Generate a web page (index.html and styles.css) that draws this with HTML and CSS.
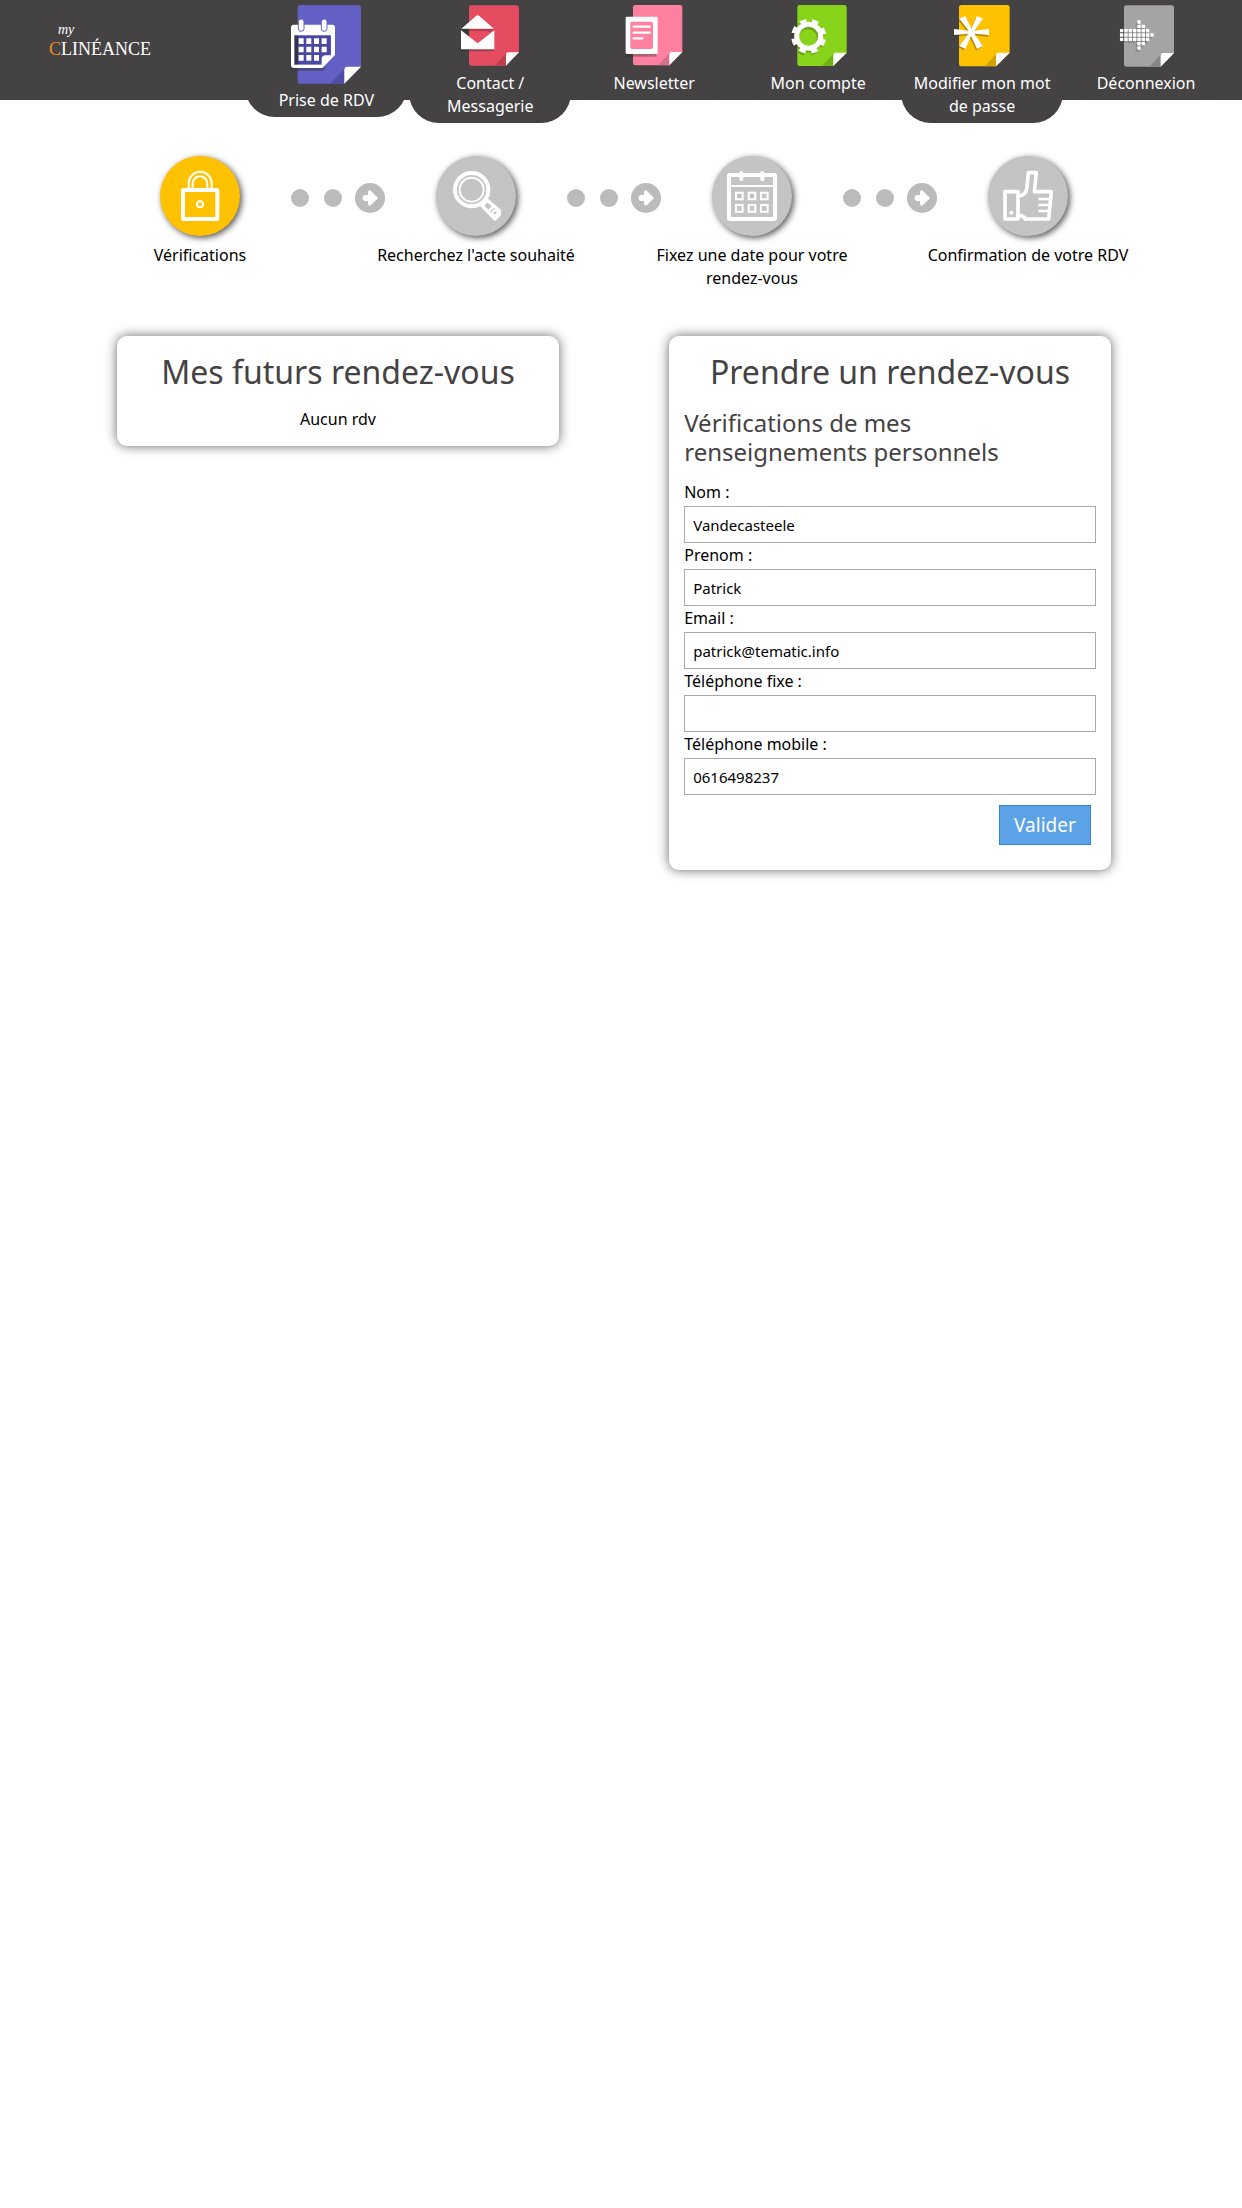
FILE: index.html
```html
<!DOCTYPE html>
<html lang="fr">
<head>
  <meta charset="utf-8">
  <meta name="viewport" content="width=device-width, initial-scale=1">
  <title>My Clinéance - Prise de RDV</title>
  <link rel="stylesheet" href="styles.css">
</head>
<body>
  <header class="header">
    <a class="logo" href="#">
      <span class="logo-my">my</span>
      <span class="logo-name"><span class="logo-c">C</span>LINÉANCE</span>
    </a>
    <nav class="menu">
      <a class="menu-item" href="#">
        <svg width="74" height="80" viewBox="150 12 222 240" aria-hidden="true">
          <path fill="#6260c4" d="M184 15H358Q366 15 366 23V200L316 251H184Q176 251 176 243V23Q176 15 184 15Z"/>
          <path fill="#4f4ca5" d="M316 208V251H274Z"/>
          <path fill="#fff" d="M366 200L316 251V210Q316 200 326 200Z"/>
          <path fill="#35343c" d="M152 108V198Q152 212 164 212H252L262 202H160Z" opacity=".5"/>
          <path fill="#4a47a0" d="M168 106H274V162L246 192H168Z"/>
          <path fill="#33324f" d="M166 106H177V192H166Z"/>
          <path fill="#fff" fill-rule="evenodd" d="M164 74H280Q288 74 288 82V165L250 204H164Q156 204 156 196V82Q156 74 164 74ZM166 106V194H248V174Q250 166 258 166H276V106Z"/>
          <g fill="#fff" stroke="#6260c4" stroke-width="3">
            <rect x="178" y="57" width="17" height="37" rx="8"/>
            <rect x="247" y="57" width="17" height="37" rx="8"/>
          </g>
          <path fill="#fff" d="M179 115h15v17h-15zM202 115h15v17h-15zM225 115h15v17h-15zM248 115h15v17h-15zM179 140h15v17h-15zM202 140h15v17h-15zM225 140h15v17h-15zM248 140h15v17h-15zM179 165h15v17h-15zM202 165h15v17h-15zM225 165h15v17h-15z"/>
        </svg>
        <span>Prise de RDV</span>
      </a>
      <a class="menu-item" href="#">
        <svg width="62" height="63" viewBox="660 12 186 189" aria-hidden="true">
          <path fill="#e64c5f" d="M697 16H833Q840 16 840 23V157L801 197H697Q690 197 690 190V23Q690 16 697 16Z"/>
          <path fill="#bd4051" d="M801 161V197H766Z"/>
          <path fill="#fff" d="M840 157L801 197V165Q801 157 809 157Z"/>
          <path fill="#333" opacity=".45" d="M664 148H764V154H664Z"/>
          <path fill="#303a35" d="M667 87H690V108Z"/>
          <path fill="#b93d4d" d="M690 87H765L754 96H690Z"/>
          <path fill="#e64c5f" d="M690 93H748L716 128L690 106Z"/>
          <path fill="#fff" d="M667 86L712 47Q716 44 720 47L765 86ZM666 91L716 130L766 91V148H666Z"/>
        </svg>
        <span>Contact / Messagerie</span>
      </a>
      <a class="menu-item" href="#">
        <svg width="62" height="63" viewBox="130 12 186 189" aria-hidden="true">
          <path fill="#ff819f" d="M167 15H301Q308 15 308 22V156L269 196H167Q160 196 160 189V22Q160 15 167 15Z"/>
          <path fill="#d4708b" d="M269 160V196H235Z"/>
          <path fill="#fff" d="M308 156L269 196V164Q269 156 277 156Z"/>
          <path fill="#333" opacity=".4" d="M136 162H230V170H136Z"/>
          <rect x="138" y="50" width="96" height="112" rx="4" fill="#fff"/>
          <rect x="152" y="65" width="68" height="82" rx="5" fill="#ff819f"/>
          <path stroke="#fff" stroke-width="7" stroke-linecap="round" d="M162 80H210M162 98H210M162 115H188"/>
        </svg>
        <span>Newsletter</span>
      </a>
      <a class="menu-item" href="#">
        <svg width="62" height="63" viewBox="621 12 186 189" aria-hidden="true">
          <path fill="#88d41a" d="M659 15H793Q800 15 800 22V158L760 198H659Q652 198 652 191V22Q652 15 659 15Z"/>
          <path fill="#72b016" d="M760 162V198H726Z"/>
          <path fill="#fff" d="M800 158L760 198V166Q760 158 768 158Z"/>
          <g fill="none" stroke="#264000" opacity=".3">
            <circle cx="683" cy="115" r="35" stroke-width="15"/>
            <circle cx="683" cy="115" r="46" stroke-width="12" stroke-dasharray="18 18.13" stroke-dashoffset="-9"/>
          </g>
          <g fill="none" stroke="#fff">
            <circle cx="686" cy="109" r="36" stroke-width="15"/>
            <circle cx="686" cy="109" r="46" stroke-width="13" stroke-dasharray="19 17.13" stroke-dashoffset="-9"/>
          </g>
        </svg>
        <span>Mon compte</span>
      </a>
      <a class="menu-item" href="#">
        <svg width="62" height="63" viewBox="213 12 186 189" aria-hidden="true">
          <path fill="#ffc200" d="M244 15H382Q389 15 389 22V158L348 199H244Q237 199 237 192V22Q237 15 244 15Z"/>
          <path fill="#d3a100" d="M348 163V199H314Z"/>
          <path fill="#fff" d="M389 158L348 199V167Q348 158 357 158Z"/>
          <path fill="#3a3000" opacity=".4" d="M219 91L263 98L235 60L253 53L271 91L288 53L306 60L280 97L324 92V110L280 106L306 142L288 151L270 113L253 151L235 142L262 106L219 110Z"/>
          <path fill="#fff" d="M222 87L266 92L238 56L256 48L274 86L291 48L309 56L283 92L327 87V105L283 101L309 138L291 147L273 108L256 147L238 138L265 101L222 105Z"/>
        </svg>
        <span>Modifier mon mot de passe</span>
      </a>
      <a class="menu-item" href="#">
        <svg width="62" height="63" viewBox="703 12 186 189" aria-hidden="true">
          <path fill="#a4a4a4" d="M737 16H873Q880 16 880 23V159L840 200H737Q730 200 730 193V23Q730 16 737 16Z"/>
          <path fill="#868686" d="M840 164V200H806Z"/>
          <path fill="#fff" d="M880 159L840 200V168Q840 159 849 159Z"/>
          <g fill="none" stroke="#555" stroke-width="10" stroke-dasharray="10 3" opacity=".35">
            <path d="M713 98H800M713 111H813M713 124H800M765 72H775M765 85H788M765 137H788M765 150H775"/>
          </g>
          <g fill="none" stroke="#fff" stroke-width="10" stroke-dasharray="10 3">
            <path d="M718 92H806M718 105H821M718 118H806M770 66H780M770 79H793M770 131H793M770 144H780"/>
          </g>
        </svg>
        <span>Déconnexion</span>
      </a>
    </nav>
  </header>

  <main class="container">
    <ol class="steps">
      <li class="step">
        <div class="step-icons">
          <span class="circle active">
            <svg width="80" height="80" viewBox="90 48 240 240" fill="none" stroke="#fff" aria-hidden="true">
              <rect x="159" y="150" width="103" height="87" rx="2" stroke-width="12"/>
              <path stroke-width="6" d="M176 146V130A34 34 0 0 1 245 130V146"/>
              <path stroke-width="6" d="M188 146V131A22 22 0 0 1 232 131V146"/>
              <circle cx="210" cy="193" r="9" stroke-width="6"/>
            </svg>
          </span>
          <svg class="dots" width="94" height="30" viewBox="0 0 94 30" aria-hidden="true">
            <circle cx="9" cy="15" r="9"/><circle cx="42" cy="15" r="9"/><circle cx="79" cy="15" r="15"/>
            <path d="M73 12H77V9Q78 6 80 8L87 15L80 22Q78 24 77 21V18H73Q70 15 73 12Z"/>
          </svg>
        </div>
        <span class="step-label">Vérifications</span>
      </li>
      <li class="step">
        <div class="step-icons">
          <span class="circle">
            <svg width="80" height="80" viewBox="108 48 240 240" fill="none" stroke="#fff" aria-hidden="true">
              <circle cx="215" cy="149" r="50" stroke-width="12"/>
              <circle cx="215" cy="149" r="36" stroke-width="6"/>
              <path stroke-width="10" stroke-linejoin="round" d="M246 197L285 237L298 224V212L262 181Z"/>
              <path stroke-width="8" d="M268 212L280 199"/>
              <circle cx="285" cy="218" r="7" stroke-width="5"/>
            </svg>
          </span>
          <svg class="dots" width="94" height="30" viewBox="0 0 94 30" aria-hidden="true">
            <circle cx="9" cy="15" r="9"/><circle cx="42" cy="15" r="9"/><circle cx="79" cy="15" r="15"/>
            <path d="M73 12H77V9Q78 6 80 8L87 15L80 22Q78 24 77 21V18H73Q70 15 73 12Z"/>
          </svg>
        </div>
        <span class="step-label">Recherchez l'acte souhaité</span>
      </li>
      <li class="step">
        <div class="step-icons">
          <span class="circle">
            <svg width="80" height="80" viewBox="66 48 240 240" fill="none" stroke="#fff" aria-hidden="true">
              <rect x="117" y="105" width="138" height="132" rx="2" stroke-width="12"/>
              <path stroke-width="6" d="M117 138H255"/>
              <path stroke-width="12" stroke-linecap="round" d="M154 99V118M217 99V118"/>
              <path stroke-width="6" d="M138 158h20v20h-20zM176 158h20v20h-20zM213 158h20v20h-20zM138 195h20v20h-20zM176 195h20v20h-20zM213 195h20v20h-20z"/>
            </svg>
          </span>
          <svg class="dots" width="94" height="30" viewBox="0 0 94 30" aria-hidden="true">
            <circle cx="9" cy="15" r="9"/><circle cx="42" cy="15" r="9"/><circle cx="79" cy="15" r="15"/>
            <path d="M73 12H77V9Q78 6 80 8L87 15L80 22Q78 24 77 21V18H73Q70 15 73 12Z"/>
          </svg>
        </div>
        <span class="step-label">Fixez une date pour votre rendez-vous</span>
      </li>
      <li class="step">
        <div class="step-icons">
          <span class="circle">
            <svg width="80" height="80" viewBox="264 48 240 240" fill="none" stroke="#fff" stroke-linejoin="round" aria-hidden="true">
              <path stroke-width="11" d="M315 155H354V237H315Z"/>
              <path stroke-width="11" d="M356 168Q379 166 381 142L385 98H409L403 155H454L446 237H376Q370 226 358 226"/>
              <path stroke-width="7" d="M415 177H450M415 195H448M415 213H446"/>
              <circle cx="334" cy="218" r="6" fill="#fff" stroke="none"/>
            </svg>
          </span>
        </div>
        <span class="step-label">Confirmation de votre RDV</span>
      </li>
    </ol>

    <div class="columns">
      <section class="card">
        <h1>Mes futurs rendez-vous</h1>
        <p class="empty">Aucun rdv</p>
      </section>

      <section class="card">
        <h1>Prendre un rendez-vous</h1>
        <h2>Vérifications de mes renseignements personnels</h2>
        <form class="form">
          <label for="nom">Nom :</label>
          <input type="text" id="nom" value="Vandecasteele">
          <label for="prenom">Prenom :</label>
          <input type="text" id="prenom" value="Patrick">
          <label for="email">Email :</label>
          <input type="email" id="email" value="patrick@tematic.info">
          <label for="fixe">Téléphone fixe :</label>
          <input type="tel" id="fixe">
          <label for="mobile">Téléphone mobile :</label>
          <input type="tel" id="mobile" value="0616498237">
          <button type="submit" class="submit">Valider</button>
        </form>
      </section>
    </div>
  </main>
</body>
</html>
```
FILE: styles.css
```css
* {
  box-sizing: border-box;
}

body {
  margin: 0;
  background: #fff;
  color: #000;
  font-family: "Noto Sans", sans-serif;
  font-size: 16px;
  line-height: 23px;
}

.header {
  display: flex;
  align-items: flex-start;
  height: 100px;
  padding-right: 15px;
  background: #444243;
}

.logo {
  display: flex;
  flex-direction: column;
  width: 20%;
  padding: 22px 0 0 49px;
  color: #fff;
  font-family: "Liberation Serif", serif;
  text-decoration: none;
}

.logo-my {
  padding-left: 9px;
  font-size: 14px;
  font-style: italic;
  line-height: 16px;
}

.logo-name {
  font-size: 18px;
  line-height: 22px;
}

.logo-c {
  color: #f08a1c;
}

.menu {
  display: flex;
  align-items: flex-start;
  gap: 2px;
  width: 80%;
}

/* two-line items hang below the bar */
.menu-item {
  display: flex;
  flex: 1;
  flex-direction: column;
  align-items: center;
  gap: 5px;
  padding: 4px 8px 5px;
  background: #444243;
  border-radius: 0 0 30px 30px;
  color: #fff;
  text-align: center;
  text-decoration: none;
}

.container {
  padding: 56px 76px 56px 62px;
}

.steps {
  display: grid;
  grid-template-columns: repeat(4, 1fr);
  margin: 0;
  padding: 0;
  list-style: none;
}

.step {
  display: flex;
  flex-direction: column;
  align-items: center;
  gap: 8px;
}

.step-icons {
  display: grid;
  grid-template-columns: 1fr auto 1fr;
  align-items: center;
  width: 100%;
}

.circle {
  grid-column: 2;
  width: 80px;
  height: 80px;
  background: #c4c4c4;
  border-radius: 50%;
  box-shadow: 2px 2px 6px #555;
}

.circle.active {
  background: #ffc200;
}

/* the dots straddle the gap between two steps */
.dots {
  justify-self: end;
  margin-top: 4px;
  margin-right: -47px;
  fill: #bbb;
}

.dots path {
  fill: #fff;
}

.step-label {
  width: 80%;
  text-align: center;
}

.columns {
  display: grid;
  grid-template-columns: 1fr 1fr;
  align-items: start;
  margin-top: 46px;
}

.card {
  justify-self: center;
  width: 80%;
  padding: 15px;
  background: #fff;
  border-radius: 10px;
  box-shadow: 0 0 12px #666;
}

.card h1 {
  margin: 0 0 16px;
  color: #444243;
  font-size: 32px;
  font-weight: 400;
  line-height: 41px;
  text-align: center;
}

.card h2 {
  margin: 0 0 14px;
  color: #444243;
  font-size: 24px;
  font-weight: 400;
  line-height: 29px;
}

.empty {
  margin: 0;
  text-align: center;
}

.form {
  display: flex;
  flex-direction: column;
}

.form label {
  margin: 1px 0 2px;
}

.form input {
  width: 100%;
  height: 37px;
  padding: 0 8px;
  background: #fff;
  border: 1px solid #aaa;
  border-radius: 0;
  color: #000;
  font-family: "Noto Sans", sans-serif;
  font-size: 15px;
}

.submit {
  align-self: flex-end;
  height: 40px;
  margin: 10px 5px;
  padding: 0 14px;
  background: #5ba2e6;
  border: 1px solid #2f87d4;
  color: #fff;
  font-family: "Noto Sans", sans-serif;
  font-size: 19px;
  cursor: pointer;
}
```
